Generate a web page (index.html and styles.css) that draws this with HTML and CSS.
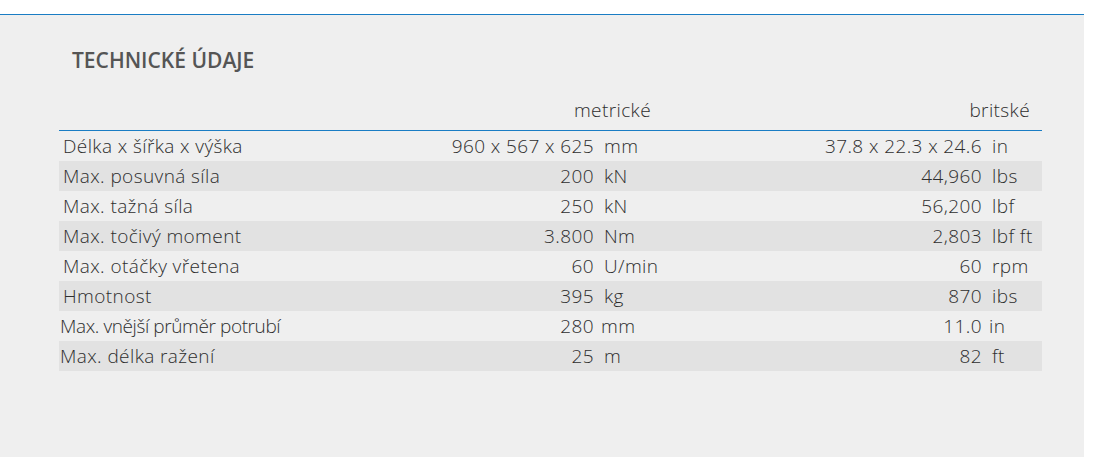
FILE: index.html
```html
<!DOCTYPE html>
<html lang="cs">
<head>
<meta charset="utf-8">
<title>Technické údaje</title>
<link rel="stylesheet" href="styles.css">
</head>
<body>
<section class="panel">
  <h2 class="title">TECHNICKÉ ÚDAJE</h2>
  <table class="specs">
    <colgroup>
      <col class="c-label"><col class="c-mval"><col class="c-munit"><col class="c-ival"><col class="c-iunit">
    </colgroup>
    <thead>
      <tr>
        <th></th>
        <th colspan="2" class="h-metric">metrické</th>
        <th colspan="2" class="h-imp">britské</th>
      </tr>
    </thead>
    <tbody>
      <tr><td class="label">Délka x šířka x výška</td><td class="val">960 x 567 x 625</td><td class="unit">mm</td><td class="val">37.8 x 22.3 x 24.6</td><td class="unit">in</td></tr>
      <tr><td class="label">Max. posuvná síla</td><td class="val">200</td><td class="unit">kN</td><td class="val">44,960</td><td class="unit">lbs</td></tr>
      <tr><td class="label">Max. tažná síla</td><td class="val">250</td><td class="unit">kN</td><td class="val">56,200</td><td class="unit">lbf</td></tr>
      <tr><td class="label">Max. točivý moment</td><td class="val">3.800</td><td class="unit">Nm</td><td class="val">2,803</td><td class="unit">lbf ft</td></tr>
      <tr><td class="label">Max. otáčky vřetena</td><td class="val">60</td><td class="unit">U/min</td><td class="val">60</td><td class="unit">rpm</td></tr>
      <tr><td class="label">Hmotnost</td><td class="val">395</td><td class="unit">kg</td><td class="val">870</td><td class="unit">ibs</td></tr>
      <tr class="tight"><td class="label">Max. vnější průměr potrubí</td><td class="val">280</td><td class="unit">mm</td><td class="val">11.0</td><td class="unit">in</td></tr>
      <tr class="flush"><td class="label">Max. délka ražení</td><td class="val">25</td><td class="unit">m</td><td class="val">82</td><td class="unit">ft</td></tr>
    </tbody>
  </table>
</section>
</body>
</html>
```
FILE: styles.css
```css
html, body {
  margin: 0;
  padding: 0;
  background: #ffffff;
}
body {
  font-family: "Open Sans", "DejaVu Sans", sans-serif;
  color: #333;
}
.panel {
  width: 1084px;
  height: 443px;
  margin-top: 14px;
  border-top: 1px solid #1a7dc4;
  background: #efefef;
  padding: 0 0 0 59px;
  box-sizing: border-box;
}
.title {
  margin: 0;
  padding: 31px 0 0 13px;
  font-size: 21px;
  line-height: 28px;
  font-weight: 600;
  color: #555;
}
.specs {
  margin-top: 21px;
  width: 983px;
  border-collapse: collapse;
  table-layout: fixed;
  font-size: 19px;
  font-weight: 300;
  letter-spacing: 0.4px;
  color: #2e2e2e;
}
.c-label { width: 390px; }
.c-mval { width: 149px; }
.c-munit { width: 62px; }
.c-ival { width: 326px; }
.c-iunit { width: 56px; }
.specs thead th {
  font-weight: 300;
  text-align: right;
  padding: 3px 0 8px 0;
  vertical-align: top;
  line-height: 24px;
  border-bottom: 1px solid #1a7dc4;
}
.h-metric { padding-right: 9px !important; }
.h-imp { padding-right: 12px !important; }
.specs td {
  height: 30px;
  padding: 0;
  line-height: 30px;
  white-space: nowrap;
}
.specs tbody tr:nth-child(even) td {
  background: #e2e2e2;
}
.label { padding-left: 4px !important; }
.val { text-align: right; padding-right: 4px !important; }
.unit { padding-left: 6px !important; }
.tight .label {
  padding-left: 1px !important;
  letter-spacing: -0.4px;
}
.tight .unit { padding-left: 3px !important; }
.flush .label { padding-left: 1px !important; }
```
